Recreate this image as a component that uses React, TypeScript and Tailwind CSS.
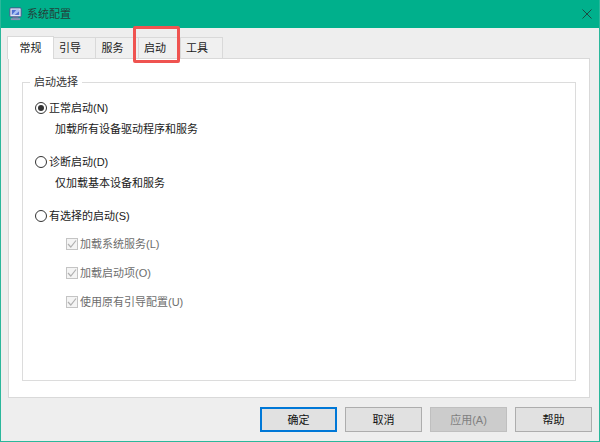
const font = { fontFamily: '"Liberation Sans", "Noto Sans CJK SC", sans-serif' };

const tabs = [
  { label: "引导", width: "w-[43px]" },
  { label: "服务", width: "w-[44px]" },
  { label: "启动", width: "w-[43px]" },
  { label: "工具", width: "w-[43px]" },
];

function Radio({ checked, label }: { checked?: boolean; label: string }) {
  return (
    <div className="flex items-center h-[16px] gap-[2px]">
      <span className="w-[12px] h-[12px] rounded-full border border-[#333333] bg-white flex items-center justify-center">
        {checked && <span className="w-[6px] h-[6px] rounded-full bg-[#333333]" />}
      </span>
      <span>{label}</span>
    </div>
  );
}

function Check({ label }: { label: string }) {
  return (
    <div className="flex items-center h-[16px] gap-[2px] text-[#6d6d6d]">
      <span className="w-[12px] h-[12px] border border-[#c4c4c4] bg-[#f4f4f4] flex items-center justify-center">
        <svg width="10" height="10" viewBox="0 0 10 10" fill="none" stroke="#b0b0b0" strokeWidth="1.2">
          <path d="M1 5 L3.8 8 L9 1.5" />
        </svg>
      </span>
      <span>{label}</span>
    </div>
  );
}

function Btn({ label, primary, disabled }: { label: string; primary?: boolean; disabled?: boolean }) {
  let cls = "border border-[#adadad] bg-[#e1e1e1] text-[#111111]";
  if (primary) cls = "border-2 border-[#0078d7] bg-[#e1e1e1] text-[#111111]";
  if (disabled) cls = "border border-[#bfbfbf] bg-[#cccccc] text-[#7f7f7f]";
  return (
    <div className={`w-[77px] h-[25px] flex items-center justify-center ${cls}`}>{label}</div>
  );
}

export default function App() {
  return (
    <div
      className="relative w-[600px] h-[442px] flex flex-col bg-[#eeeeee] text-[11px] leading-[16px] text-[#1a1a1a] border-x border-b border-[#2bb79b] overflow-hidden"
      style={font}
    >
      {/* title bar */}
      <div className="h-[28px] -mx-px bg-[#00b08c] flex items-center pl-[8px] pr-[8px] shrink-0">
        <svg width="15" height="16" viewBox="0 0 16 16" className="shrink-0">
          <rect x="2" y="1.5" width="12" height="9.5" rx="1" fill="#dfe4f2" stroke="#4a4f8f" />
          <rect x="4" y="3.5" width="8" height="5.5" fill="#4f6fd0" />
          <path d="M4 9 L9 3.5 H12 V5 L7 9 Z" fill="#a9c0f2" />
          <rect x="5" y="11" width="6" height="1.5" fill="#6a6f9a" />
          <rect x="3" y="12.5" width="10" height="2" fill="#8b8fb5" />
        </svg>
        <span className="ml-[4px] text-[#23403a]">系统配置</span>
        <svg width="10" height="10" viewBox="0 0 10 10" className="ml-auto mr-[0px]" stroke="#1c4a42" strokeWidth="1">
          <path d="M0.5 0.5 L9.5 9.5 M9.5 0.5 L0.5 9.5" />
        </svg>
      </div>

      {/* tabs */}
      <div className="flex items-end h-[30px] pl-[6px] shrink-0">
        <div className="w-[47px] h-[23px] -mb-px z-10 bg-white border border-b-0 border-[#d9d9d9] flex items-center justify-center">
          常规
        </div>
        {tabs.map((tab) => (
          <div
            key={tab.label}
            className={`${tab.width} h-[21px] -ml-px bg-[#f0f0f0] border border-b-0 border-[#d9d9d9] flex items-center justify-center pr-[9px]`}
          >
            {tab.label}
          </div>
        ))}
      </div>

      {/* panel */}
      <div className="ml-[7px] mr-[9px] h-[340px] shrink-0 bg-white border border-[#d9d9d9] px-[13px] pt-[15px] pb-[16px] flex flex-col">
        <fieldset className="flex-1 border border-[#dcdcdc] px-[12px] min-h-0">
          <legend className="ml-[-5px] px-[4px] leading-[16px] text-[#333333]">启动选择</legend>
          <div className="pt-[10px] flex flex-col">
            <Radio checked label="正常启动(N)" />
            <div className="pl-[20px] mt-[5px]">加载所有设备驱动程序和服务</div>
            <div className="mt-[17px]"><Radio label="诊断启动(D)" /></div>
            <div className="pl-[20px] mt-[5px]">仅加载基本设备和服务</div>
            <div className="mt-[17px]"><Radio label="有选择的启动(S)" /></div>
            <div className="pl-[31px] mt-[12px] flex flex-col gap-[13px]">
              <Check label="加载系统服务(L)" />
              <Check label="加载启动项(O)" />
              <Check label="使用原有引导配置(U)" />
            </div>
          </div>
        </fieldset>
      </div>

      {/* buttons */}
      <div className="flex justify-end gap-[8px] pr-[7px] pt-[9px]">
        <Btn primary label="确定" />
        <Btn label="取消" />
        <Btn disabled label="应用(A)" />
        <Btn label="帮助" />
      </div>

      {/* red highlight over the tab */}
      <div className="absolute left-[132px] top-[26px] w-[47px] h-[37px] border-[3px] border-[#ef5350] rounded-[2px]" />
    </div>
  );
}
